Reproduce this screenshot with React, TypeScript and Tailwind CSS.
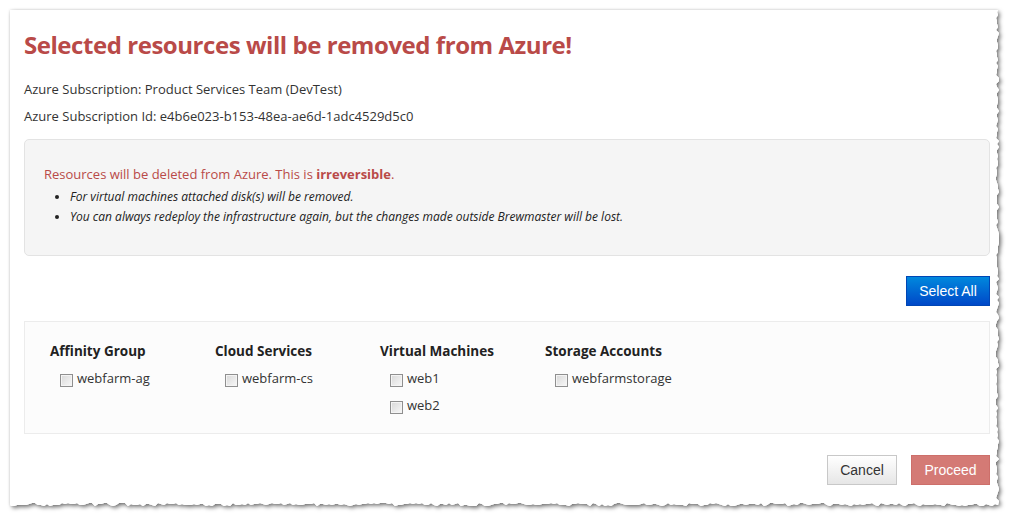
import React from "react";

function rng(seed: number) {
  let s = seed;
  return () => {
    s = (s * 9301 + 49297) % 233280;
    return s / 233280;
  };
}

function TornPaper() {
  const r = rng(7);
  const pts: string[] = [];
  pts.push("10,10");
  pts.push("998,10");
  for (let y = 12; y < 504; y += 3) {
    const x = 996 + Math.round(r() * 3);
    pts.push(`${x},${y}`);
  }
  for (let x = 998; x > 10; x -= 3) {
    const y = 503 + Math.round(r() * 3);
    pts.push(`${x},${y}`);
  }
  pts.push("10,504");
  const poly = pts.join(" ");
  return (
    <svg className="absolute left-0 top-0 pointer-events-none" width="1017" height="522">
      <defs>
        <filter id="sh" x="-5%" y="-5%" width="110%" height="110%">
          <feDropShadow dx="2" dy="2" stdDeviation="2" floodColor="#000" floodOpacity="0.55" />
        </filter>
        <filter id="sh2" x="-5%" y="-5%" width="110%" height="110%">
          <feDropShadow dx="0" dy="0" stdDeviation="1.2" floodColor="#000" floodOpacity="0.12" />
        </filter>
      </defs>
      <polygon points={poly} fill="#fff" filter="url(#sh2)" />
      <polygon points={poly} fill="#fff" filter="url(#sh)" />
      <polygon points={poly} fill="#fff" />
    </svg>
  );
}

function Checkbox() {
  return (
    <span className="inline-block w-[13px] h-[13px] border border-[#8f8f8f] bg-[linear-gradient(135deg,#d8d8d8,#f8f8f8)] shadow-[inset_0_0_0_1px_#f4f4f4] shrink-0" />
  );
}

function Column({ title, items }: { title: string; items: string[] }) {
  return (
    <div className="w-[165px] flex flex-col">
      <div className="font-bold text-[13.5px] leading-[20px] text-[#222]">{title}</div>
      <div className="flex flex-col gap-[7px] pl-[10px] mt-[7px]">
        {items.map((it) => (
          <div key={it} className="flex items-center gap-[4px] h-[20px]">
            <span className="mt-[4px] flex"><Checkbox /></span>
            <span className="text-[13px] leading-[20px] text-[#333]">{it}</span>
          </div>
        ))}
      </div>
    </div>
  );
}

export default function App() {
  const font = { fontFamily: '"Open Sans", "Noto Sans", sans-serif' };
  return (
    <div className="relative w-[1017px] h-[522px] bg-white overflow-hidden" style={font}>
      <TornPaper />
      <div className="relative ml-[24px] w-[966px] pt-[28px] flex flex-col">
        <h1 className="text-[24px] leading-[34px] font-bold text-[#b94a48] tracking-[-0.45px]">
          Selected resources will be removed from Azure!
        </h1>
        <div className="mt-[14px] text-[13px] leading-[27px] text-[#333]">
          <div>Azure Subscription: Product Services Team (DevTest)</div>
          <div>Azure Subscription Id: e4b6e023-b153-48ea-ae6d-1adc4529d5c0</div>
        </div>
        <div className="mt-[9px] h-[117px] rounded-[5px] border border-[#e3e3e3] bg-[#f5f5f5] pl-[19px] pt-[24px]">
          <div className="text-[13px] leading-[20px] text-[#b94a48]">
            Resources will be deleted from Azure. This is <b>irreversible</b>.
          </div>
          <ul className="mt-[3px] list-disc pl-[26px] text-[12px] italic leading-[20px] text-[#222]">
            <li>For virtual machines attached disk(s) will be removed.</li>
            <li>You can always redeploy the infrastructure again, but the changes made outside Brewmaster will be lost.</li>
          </ul>
        </div>
        <div className="flex justify-end mt-[20px]">
          <button
            className="w-[84px] h-[30px] text-white text-[14px] bg-[linear-gradient(#0088dd,#0048c8)] border border-[#0046b5]"
            style={{ fontFamily: '"Liberation Sans", Arial, sans-serif' }}
          >
            Select All
          </button>
        </div>
        <div className="mt-[15px] h-[113px] border border-[#ececec] bg-[#fcfcfc] pl-[25px] pt-[19px] flex">
          <Column title="Affinity Group" items={["webfarm-ag"]} />
          <Column title="Cloud Services" items={["webfarm-cs"]} />
          <Column title="Virtual Machines" items={["web1", "web2"]} />
          <Column title="Storage Accounts" items={["webfarmstorage"]} />
        </div>
        <div
          className="flex justify-end gap-[14px] mt-[21px]"
          style={{ fontFamily: '"Liberation Sans", Arial, sans-serif' }}
        >
          <button className="w-[70px] h-[30px] text-[14px] text-[#333] border border-[#c8c8c8] bg-[linear-gradient(#ffffff,#e6e6e6)]">
            Cancel
          </button>
          <button className="w-[79px] h-[30px] text-[14px] text-white bg-[#d47a75] border border-[#cd6f6a]">
            Proceed
          </button>
        </div>
      </div>
    </div>
  );
}
